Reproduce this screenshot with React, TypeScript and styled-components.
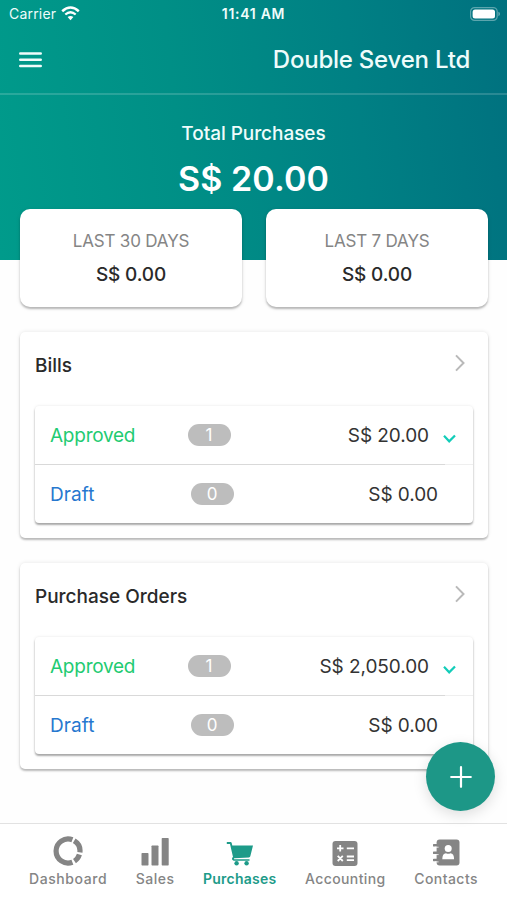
import React from 'react';
import styled, { createGlobalStyle } from 'styled-components';

const Global = createGlobalStyle`
  * { box-sizing: border-box; }
  body { margin: 0; background: #fff; font-family: Inter, Roboto, sans-serif; }
`;

const Screen = styled.div`
  position: relative;
  width: 507px;
  height: 900px;
  display: flex;
  flex-direction: column;
  overflow: hidden;
  background: #fefefe;
  color: #2a2a2a;
`;

const Hero = styled.header`
  height: 260px;
  flex: none;
  display: flex;
  flex-direction: column;
  color: #effcfb;
  background: linear-gradient(83deg, #009b8b 0%, #008f86 36%, #008084 70%, #00717f 100%);
`;

const StatusBar = styled.div`
  height: 28px;
  padding: 0 7px 0 9px;
  display: grid;
  grid-template-columns: 1fr auto 1fr;
  align-items: center;
  line-height: 28px;
`;

const Carrier = styled.div`
  display: flex;
  align-items: center;
  gap: 5px;
  font-size: 14px;
  letter-spacing: 0.2px;
  svg { margin-top: -2px; }
`;

const Clock = styled.div`
  margin-right: 2px;
  font-size: 14px;
  font-weight: 600;
  letter-spacing: 0.7px;
`;

const Battery = styled.div`
  display: flex;
  justify-content: flex-end;
`;

const NavBar = styled.div`
  height: 67px;
  padding: 0 37px 1px 19px;
  display: flex;
  align-items: center;
  justify-content: space-between;
  border-bottom: 2px solid rgba(255, 255, 255, 0.16);
`;

const Company = styled.h1`
  margin: 0;
  font-size: 24px;
  font-weight: 500;
  letter-spacing: -0.23px;
  line-height: 30px;
`;

const Total = styled.div`
  display: flex;
  flex-direction: column;
  align-items: center;
  padding-top: 27px;
`;

const TotalLabel = styled.div`
  font-size: 19px;
  font-weight: 500;
  line-height: 24px;
  letter-spacing: -0.05px;
`;

const TotalValue = styled.div`
  margin-top: 13px;
  font-size: 34px;
  font-weight: 600;
  line-height: 40px;
  letter-spacing: 0.1px;
  color: #fff;
`;

const Summary = styled.section`
  display: grid;
  grid-template-columns: 1fr 1fr;
  gap: 24px;
  margin: -51px 19px 0 20px;
`;

const SummaryCard = styled.div`
  height: 98px;
  padding-top: 20px;
  border-radius: 10px;
  background: #fff;
  text-align: center;
  box-shadow: 0 2px 2px rgba(0, 0, 0, 0.24), 0 1px 5px rgba(0, 0, 0, 0.09);
`;

const SummaryLabel = styled.div`
  font-size: 17px;
  line-height: 24px;
  letter-spacing: -0.18px;
  color: #858585;
`;

const SummaryValue = styled.div`
  margin-top: 9px;
  font-size: 19px;
  font-weight: 500;
  line-height: 26px;
  letter-spacing: -0.13px;
`;

const Panel = styled.section`
  height: 206px;
  flex: none;
  margin: 25px 19px 0 20px;
  padding: 0 15px;
  border-radius: 5px;
  background: #fff;
  box-shadow: 0 2px 2px rgba(0, 0, 0, 0.24), 0 0 4px rgba(0, 0, 0, 0.1);
`;

const PanelHead = styled.div`
  height: 74px;
  padding: 0 8px 6px 0;
  display: flex;
  align-items: center;
  justify-content: space-between;
  svg { margin-top: -6px; }
`;

const PanelTitle = styled.h2`
  margin: 0;
  font-size: 19px;
  font-weight: 500;
  line-height: 24px;
`;

const Rows = styled.div`
  height: 117px;
  border-radius: 4px;
  background: #fff;
  box-shadow: 0 2px 2px rgba(0, 0, 0, 0.32), 0 0 3px rgba(0, 0, 0, 0.1);
`;

const Row = styled.div<{ $divided?: boolean }>`
  height: ${p => (p.$divided ? 59 : 58)}px;
  padding: ${p => (p.$divided ? '2px 17px 0 15px' : '1px 35px 0 15px')};
  display: flex;
  align-items: center;
  ${p =>
    p.$divided &&
    'border-bottom: 1px solid; border-image: linear-gradient(90deg, #d9d9d9 409px, #efefef 409px) 1;'}
`;

const RowLabel = styled.div<{ $color: string; $wide?: boolean }>`
  width: ${p => (p.$wide ? 141 : 138)}px;
  font-size: 19px;
  line-height: 24px;
  letter-spacing: ${p => (p.$wide ? 0.1 : -0.25)}px;
  color: ${p => p.$color};
`;

const Count = styled.div`
  width: 43px;
  height: 22px;
  margin: -2px 0 0 -0.5px;
  border-radius: 11px;
  background: #bdbdbd;
  color: #fff;
  font-size: 17px;
  line-height: 22px;
  text-align: center;
`;

const Amount = styled.div`
  flex: 1;
  text-align: right;
  font-size: 19px;
  line-height: 24px;
  letter-spacing: -0.07px;
  color: #333;
`;

const Tick = styled.svg`
  margin: 6px 0 0 14px;
`;

const AddButton = styled.button`
  position: absolute;
  left: 426px;
  top: 742px;
  width: 69px;
  height: 69px;
  padding: 0;
  border: 0;
  border-radius: 50%;
  display: grid;
  place-items: center;
  background: #1d9787;
  box-shadow: 0 4px 14px rgba(0, 0, 0, 0.13);
`;

const TabBar = styled.nav`
  height: 77px;
  margin-top: auto;
  padding: 0 29px;
  display: flex;
  justify-content: space-between;
  background: #fff;
  border-top: 1px solid #e2e2e2;
`;

const Tab = styled.div<{ $active?: boolean; $spacing: number }>`
  display: flex;
  flex-direction: column;
  align-items: center;
  padding-top: 12px;
  font-size: 14px;
  font-weight: ${p => (p.$active ? 600 : 500)};
  letter-spacing: ${p => p.$spacing}px;
  line-height: 20px;
  color: ${p => (p.$active ? '#1d9b89' : '#858585')};
  svg { display: block; margin-bottom: 3px; }
`;

const WifiIcon = () => (
  <svg width="19" height="15" viewBox="0 0 19 15" fill="none" stroke="#fff">
    <path d="M1.2 5.2Q9.5 -2.2 17.8 5.2" strokeWidth="2.5" />
    <path d="M4.3 8.5Q9.5 4 14.7 8.5" strokeWidth="2.3" />
    <path d="M6.6 11.1Q9.5 8.8 12.4 11.1L9.5 14.2Z" fill="#fff" stroke="none" />
  </svg>
);

const BatteryIcon = () => (
  <svg width="30" height="14" viewBox="0 0 30 14">
    <rect x="0.6" y="0.6" width="26.6" height="12.8" rx="4" fill="none" stroke="#fff" strokeOpacity="0.36" strokeWidth="1.2" />
    <rect x="2.6" y="2.5" width="22.4" height="9" rx="2.5" fill="#fff" />
    <path d="M28.4 4.8Q30 5.4 30 7T28.4 9.2Z" fill="#fff" fillOpacity="0.4" />
  </svg>
);

const MenuIcon = () => (
  <svg width="23" height="16" viewBox="0 0 23 16" stroke="#effcfb" strokeWidth="2.6" strokeLinecap="round">
    <path d="M1.3 1.5H21.7M1.3 7.8H21.7M1.3 14H21.7" />
  </svg>
);

const Chevron = () => (
  <svg width="10" height="18" viewBox="0 0 10 18" fill="none" stroke="#b9b9b9" strokeWidth="2">
    <path d="M1 1.4L8.5 9L1 16.6" />
  </svg>
);

const DashboardIcon = () => (
  <svg width="30" height="30" viewBox="0 0 30 30" fill="none" stroke="currentColor" strokeWidth="5.2">
    <path d="M19.4 26.2A12 12 0 1 1 19.4 3.8" />
    <path d="M21.2 4.7A12 12 0 0 1 26.9 16.4" />
    <path d="M26.4 18.6A12 12 0 0 1 21.5 25.1" />
  </svg>
);

const SalesIcon = () => (
  <svg width="28" height="30" viewBox="0 0 28 30" fill="currentColor">
    <rect x="0.5" y="17" width="7" height="12.4" rx="0.7" />
    <rect x="10.5" y="9.5" width="7" height="19.9" rx="0.7" />
    <rect x="20.7" y="2" width="7" height="27.4" rx="0.7" />
  </svg>
);

const CartIcon = () => (
  <svg width="28" height="30" viewBox="0 0 28 30" fill="currentColor">
    <path d="M0.8 6.1H4.6Q5.4 6.1 5.7 7L6.3 9.5H27L24.3 20.2Q24 21.2 23 21.4L8.3 22.2Q7.5 22.6 8.2 23.2H23.5V24.7H7.7Q5.5 24.2 6 22.1L7 20.9L4 7.9H0.8Z" />
    <circle cx="10.6" cy="27.2" r="2.2" />
    <circle cx="20.6" cy="27.2" r="2.2" />
  </svg>
);

const AccountingIcon = () => (
  <svg width="26" height="30" viewBox="0 0 26 30">
    <rect x="0.5" y="5" width="25" height="25" rx="3" fill="currentColor" />
    <path
      d="M5 12.3H11.5M8.2 9V15.6M14.8 12.3H22M5.7 19.8L10.8 25M10.8 19.8L5.7 25M14.8 20.5H22M14.8 24.2H22"
      stroke="#fff"
      strokeWidth="1.8"
    />
  </svg>
);

const ContactsIcon = () => (
  <svg width="27" height="30" viewBox="0 0 27 30">
    <rect x="3.6" y="3.6" width="22.9" height="26" rx="3" fill="currentColor" />
    <path d="M1 9.3H5M1 16.7H5M1 24H5" stroke="currentColor" strokeWidth="2.6" strokeLinecap="round" />
    <path d="M2 11.2H5.6M2 18.6H5.6M2 25.9H5.6" stroke="#fff" strokeWidth="0.8" />
    <circle cx="15.2" cy="12.4" r="3.5" fill="#fff" />
    <path d="M9.3 23.2Q9.3 17.4 13 17.2Q15.2 18.3 17.4 17.2Q21.1 17.4 21.1 23.2Z" fill="#fff" />
  </svg>
);

const TickIcon = () => (
  <Tick width="13" height="10" viewBox="0 0 13 10" fill="none" stroke="#12cdb9" strokeWidth="2.2">
    <path d="M1 1.8L6.2 7.3L12 1.4" />
  </Tick>
);

const PlusIcon = () => (
  <svg width="22" height="22" viewBox="0 0 22 22" stroke="#fff" strokeWidth="2.2" strokeLinecap="round">
    <path d="M11 1.2V20.8M1.2 11H20.8" />
  </svg>
);

const panels = [
  { title: 'Bills', approved: 'S$ 20.00' },
  { title: 'Purchase Orders', approved: 'S$ 2,050.00' },
];

const summaries = ['LAST 30 DAYS', 'LAST 7 DAYS'];

const tabs = [
  { name: 'Dashboard', icon: <DashboardIcon />, spacing: 0.58 },
  { name: 'Sales', icon: <SalesIcon />, spacing: 0.48 },
  { name: 'Purchases', icon: <CartIcon />, spacing: 0.26, active: true },
  { name: 'Accounting', icon: <AccountingIcon />, spacing: 0.4 },
  { name: 'Contacts', icon: <ContactsIcon />, spacing: 0.45 },
];

export default function App() {
  return (
    <Screen>
      <Global />
      <Hero>
        <StatusBar>
          <Carrier>Carrier <WifiIcon /></Carrier>
          <Clock>11:41 AM</Clock>
          <Battery><BatteryIcon /></Battery>
        </StatusBar>
        <NavBar>
          <MenuIcon />
          <Company>Double Seven Ltd</Company>
        </NavBar>
        <Total>
          <TotalLabel>Total Purchases</TotalLabel>
          <TotalValue>S$ 20.00</TotalValue>
        </Total>
      </Hero>
      <Summary>
        {summaries.map(label => (
          <SummaryCard key={label}>
            <SummaryLabel>{label}</SummaryLabel>
            <SummaryValue>S$ 0.00</SummaryValue>
          </SummaryCard>
        ))}
      </Summary>
      {panels.map(panel => (
        <Panel key={panel.title}>
          <PanelHead>
            <PanelTitle>{panel.title}</PanelTitle>
            <Chevron />
          </PanelHead>
          <Rows>
            <Row $divided>
              <RowLabel $color="#1fcb72">Approved</RowLabel>
              <Count>1</Count>
              <Amount>{panel.approved}</Amount>
              <TickIcon />
            </Row>
            <Row>
              <RowLabel $color="#2678cf" $wide>Draft</RowLabel>
              <Count>0</Count>
              <Amount>S$ 0.00</Amount>
            </Row>
          </Rows>
        </Panel>
      ))}
      <TabBar>
        {tabs.map(tab => (
          <Tab key={tab.name} $active={tab.active} $spacing={tab.spacing}>
            {tab.icon}
            {tab.name}
          </Tab>
        ))}
      </TabBar>
      <AddButton aria-label="Add"><PlusIcon /></AddButton>
    </Screen>
  );
}
